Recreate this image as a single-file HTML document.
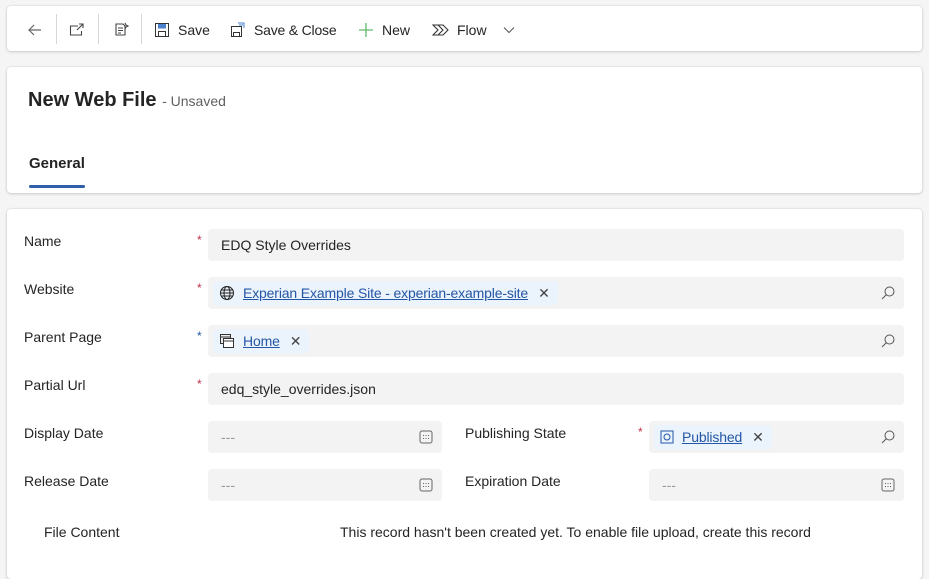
<!DOCTYPE html>
<html><head><style>
body{margin:0;width:929px;height:568px;background:#f5f5f5;font-family:"Liberation Sans",sans-serif;color:#242424;overflow:hidden;position:relative}
.card{position:absolute;background:#fff;border-radius:4px;box-shadow:0 0 2px rgba(0,0,0,.12),0 1px 3px rgba(0,0,0,.14)}
.tb{left:7px;top:6px;width:915px;height:45px}
.ti{position:absolute;top:1px;height:45px;display:flex;align-items:center;font-size:14px;color:#242424}
.sep{position:absolute;top:8px;width:1px;height:30px;background:#d6d6d6}
.lbl{position:absolute;font-size:14px;color:#242424}
.req{position:absolute;color:#c4314b;font-size:12px}
.inp{position:absolute;height:32px;background:#f3f3f3;border-radius:4px;font-size:14px;display:flex;align-items:center;box-sizing:border-box;padding-left:13px}
.tag{display:flex;align-items:center;background:#ebf3fc;height:24px;border-radius:4px;padding:0 8px 0 6px;margin-left:-8px;font-size:14px}
.tag a{color:#2456a6;text-decoration:underline;margin-left:8px;letter-spacing:-0.15px}
.x{color:#444;margin-left:10px;font-size:14px}
.srch{position:absolute;right:9px;top:9px}
.ph{color:#999}
</style></head><body>
<div class="card tb">
 <div class="ti" style="left:20px"><svg width="16" height="16" viewBox="0 0 16 16" fill="none" stroke="#666" stroke-width="1.2"><path d="M14 8H2M7 3L2 8l5 5"/></svg></div>
 <div class="sep" style="left:49px"></div>
 <div class="ti" style="left:62px"><svg width="16" height="16" viewBox="0 0 16 16" fill="none" stroke="#444" stroke-width="1.1"><path d="M9 4H1.5v9h11V9M10 2h4v4M14 2L8 8"/></svg></div>
 <div class="sep" style="left:91px"></div>
 <div class="ti" style="left:106px"><svg width="16" height="16" viewBox="0 0 16 16" fill="none" stroke="#444" stroke-width="1.1"><path d="M3 2h7l2 2v9H3zM5 6h5M5 8.5h5M5 11h3M12 1l1 2 2 1-2 1-1 2"/></svg></div>
 <div class="sep" style="left:134px"></div>
 <div class="ti" style="left:147px"><svg width="16" height="16" viewBox="0 0 16 16"><rect x="1.5" y="1.5" width="13" height="13" fill="#fff" stroke="#333"/><rect x="4" y="2" width="8" height="4.5" fill="#4a7fd0"/><rect x="4.5" y="9.5" width="7" height="5" fill="#fff" stroke="#333"/></svg><span style="margin-left:8px">Save</span></div>
 <div class="ti" style="left:223px"><svg width="16" height="16" viewBox="0 0 16 16" fill="none" stroke="#333"><rect x="1.5" y="4.5" width="10" height="10"/><rect x="3.5" y="10.5" width="6" height="4"/><path d="M8 1h6v5M9 3h4" stroke="#4a7fd0"/></svg><span style="margin-left:8px;letter-spacing:-0.2px">Save &amp; Close</span></div>
 <div class="ti" style="left:351px"><svg width="16" height="16" viewBox="0 0 16 16" stroke="#5fb96b" stroke-width="1.3"><path d="M8 1v14M1 8h14"/></svg><span style="margin-left:8px">New</span></div>
 <div class="ti" style="left:425px"><svg width="18" height="16" viewBox="0 0 18 16" fill="none" stroke="#333" stroke-width="1.1"><path d="M1 3h10l5 5-5 5H1l5-5zM6 3l5 5-5 5"/></svg><span style="margin-left:7px">Flow</span><svg style="margin-left:16px" width="12" height="8" viewBox="0 0 12 8" fill="none" stroke="#555"><path d="M1 1.5l5 5 5-5"/></svg></div>
</div>
<div class="card" style="left:7px;top:67px;width:915px;height:126px">
 <div style="position:absolute;left:21px;top:22px;font-size:20px;font-weight:bold;color:#242424">New Web File <span style="font-size:14px;font-weight:normal;color:#616161">- Unsaved</span></div>
 <div style="position:absolute;left:22px;top:88px;font-size:15px;font-weight:bold">General</div>
 <div style="position:absolute;left:22px;top:118px;width:56px;height:3px;background:#2f5fa8;border-radius:2px"></div>
</div>
<div class="card" style="left:7px;top:209px;width:915px;height:370px"></div>

<div class="lbl" style="left:24px;top:233px">Name</div><div class="req" style="left:197px;top:233px">*</div>
<div class="inp" style="left:208px;top:229px;width:696px">EDQ Style Overrides</div>

<div class="lbl" style="left:24px;top:281px">Website</div><div class="req" style="left:197px;top:281px">*</div>
<div class="inp" style="left:208px;top:277px;width:696px"><div class="tag"><svg width="16" height="16" viewBox="0 0 16 16" fill="none" stroke="#222"><circle cx="8" cy="8" r="6.5"/><ellipse cx="8" cy="8" rx="3" ry="6.5"/><path d="M1.5 8h13M2.5 5h11M2.5 11h11"/></svg><a>Experian Example Site - experian-example-site</a><span class="x">✕</span></div><svg class="srch" width="14" height="14" viewBox="0 0 14 14" fill="none" stroke="#555"><circle cx="8.5" cy="5.5" r="4.5"/><path d="M5.5 8.5L1 13"/></svg></div>

<div class="lbl" style="left:24px;top:329px">Parent Page</div><div class="req" style="left:197px;top:329px;color:#2456a6">*</div>
<div class="inp" style="left:208px;top:325px;width:696px"><div class="tag"><svg width="16" height="16" viewBox="0 0 16 16" fill="none" stroke="#333"><rect x="1.5" y="1.5" width="10" height="9" fill="#eee"/><path d="M1.5 4h10"/><rect x="4.5" y="5.5" width="10" height="9" fill="#fff"/><path d="M4.5 8h10"/></svg><a>Home</a><span class="x">✕</span></div><svg class="srch" width="14" height="14" viewBox="0 0 14 14" fill="none" stroke="#555"><circle cx="8.5" cy="5.5" r="4.5"/><path d="M5.5 8.5L1 13"/></svg></div>

<div class="lbl" style="left:24px;top:377px">Partial Url</div><div class="req" style="left:197px;top:377px">*</div>
<div class="inp" style="left:208px;top:373px;width:696px">edq_style_overrides.json</div>

<div class="lbl" style="left:24px;top:425px">Display Date</div>
<div class="inp" style="left:208px;top:421px;width:234px"><span class="ph">---</span><svg class="srch" width="14" height="14" viewBox="0 0 14 14" fill="none" stroke="#666"><rect x="1" y="1" width="12" height="12" rx="2"/><path d="M4 5.5h1M6.5 5.5h1M9 5.5h1M4 8.5h1M6.5 8.5h1M9 8.5h1"/></svg></div>
<div class="lbl" style="left:465px;top:425px">Publishing State</div><div class="req" style="left:638px;top:425px">*</div>
<div class="inp" style="left:649px;top:421px;width:255px"><div class="tag"><svg width="14" height="14" viewBox="0 0 14 14" fill="none" stroke="#2456a6"><rect x="1" y="1" width="12" height="12"/><circle cx="7" cy="7" r="3"/></svg><a>Published</a><span class="x">✕</span></div><svg class="srch" width="14" height="14" viewBox="0 0 14 14" fill="none" stroke="#555"><circle cx="8.5" cy="5.5" r="4.5"/><path d="M5.5 8.5L1 13"/></svg></div>

<div class="lbl" style="left:24px;top:473px">Release Date</div>
<div class="inp" style="left:208px;top:469px;width:234px"><span class="ph">---</span><svg class="srch" width="14" height="14" viewBox="0 0 14 14" fill="none" stroke="#666"><rect x="1" y="1" width="12" height="12" rx="2"/><path d="M4 5.5h1M6.5 5.5h1M9 5.5h1M4 8.5h1M6.5 8.5h1M9 8.5h1"/></svg></div>
<div class="lbl" style="left:465px;top:473px">Expiration Date</div>
<div class="inp" style="left:649px;top:469px;width:255px"><span class="ph">---</span><svg class="srch" width="14" height="14" viewBox="0 0 14 14" fill="none" stroke="#666"><rect x="1" y="1" width="12" height="12" rx="2"/><path d="M4 5.5h1M6.5 5.5h1M9 5.5h1M4 8.5h1M6.5 8.5h1M9 8.5h1"/></svg></div>

<div class="lbl" style="left:44px;top:524px">File Content</div>
<div class="lbl" style="left:340px;top:524px">This record hasn't been created yet. To enable file upload, create this record</div>
</body></html>
